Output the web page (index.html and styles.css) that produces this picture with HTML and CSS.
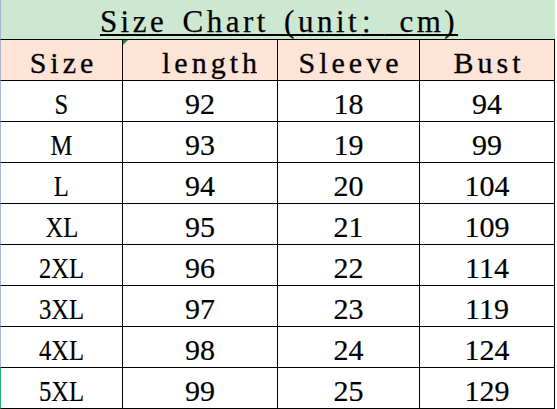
FILE: index.html
```html
<!DOCTYPE html>
<html>
<head>
<meta charset="utf-8">
<link rel="stylesheet" href="styles.css">
</head>
<body>
<div class="chart">
  <div class="title"><span class="title-text">Size Chart (unit<span class="fw">：</span> cm)</span></div>

  <div class="cell head first">Size</div>
  <div class="cell head len">length<span class="mark"></span></div>
  <div class="cell head">Sleeve</div>
  <div class="cell head">Bust</div>

  <div class="cell first"><span class="lab">S</span></div><div class="cell">92</div><div class="cell">18</div><div class="cell">94</div>
  <div class="cell first"><span class="lab">M</span></div><div class="cell">93</div><div class="cell">19</div><div class="cell">99</div>
  <div class="cell first"><span class="lab">L</span></div><div class="cell">94</div><div class="cell">20</div><div class="cell">104</div>
  <div class="cell first"><span class="lab">XL</span></div><div class="cell">95</div><div class="cell">21</div><div class="cell">109</div>
  <div class="cell first"><span class="lab">2XL</span></div><div class="cell">96</div><div class="cell">22</div><div class="cell">114</div>
  <div class="cell first"><span class="lab">3XL</span></div><div class="cell">97</div><div class="cell">23</div><div class="cell">119</div>
  <div class="cell first"><span class="lab">4XL</span></div><div class="cell">98</div><div class="cell">24</div><div class="cell">124</div>
  <div class="cell first last"><span class="lab">5XL</span></div><div class="cell">99</div><div class="cell">25</div><div class="cell">129</div>
</div>
</body>
</html>
```

FILE: styles.css
```css
html, body {
  margin: 0;
  padding: 0;
  background: #ffffff;
}

.chart {
  display: grid;
  grid-template-columns: 123px 155px 142px 135px;
  grid-template-rows: 40px repeat(9, 41px);
  width: 555px;
  font-family: "Liberation Serif", "Times New Roman", serif;
  color: #000;
}

.title {
  grid-column: 1 / -1;
  box-sizing: border-box;
  background: #cde8d1;
  border-left: 1px solid #a9b5cd;
  border-bottom: 1px solid #000;
  text-align: center;
  font-size: 31px;
  line-height: 30px;
  padding-top: 7px;
  padding-left: 2px;
  letter-spacing: 3.5px;
  word-spacing: 4px;
  -webkit-text-stroke: 0.25px #000;
}

.title-text {
  text-decoration: underline;
  text-decoration-thickness: 2px;
  text-underline-offset: 2px;
  text-decoration-skip-ink: none;
}

.fw {
  letter-spacing: 0;
  font-family: "Noto Sans CJK SC", sans-serif;
  font-size: 24px;
}

.cell {
  position: relative;
  box-sizing: border-box;
  border-right: 1px solid #000;
  border-bottom: 1px solid #000;
  text-align: center;
  font-size: 30px;
  line-height: 30px;
  padding-top: 8px;
  white-space: nowrap;
  -webkit-text-stroke: 0.2px #000;
}

.head {
  background: #fde4d7;
  letter-spacing: 4px;
  text-indent: 4px;
  -webkit-text-stroke: 0.3px #000;
}

.len {
  padding-left: 19px;
}

.first {
  border-left: 1px solid #a9b5cd;
}

.first.last {
  border-left-color: #22b573;
}

.lab {
  display: inline-block;
  transform: scaleX(0.82);
}

.mark {
  position: absolute;
  left: 0;
  top: 0;
  width: 0;
  height: 0;
  border-top: 5px solid #1d8f2e;
  border-right: 5px solid transparent;
}
```
